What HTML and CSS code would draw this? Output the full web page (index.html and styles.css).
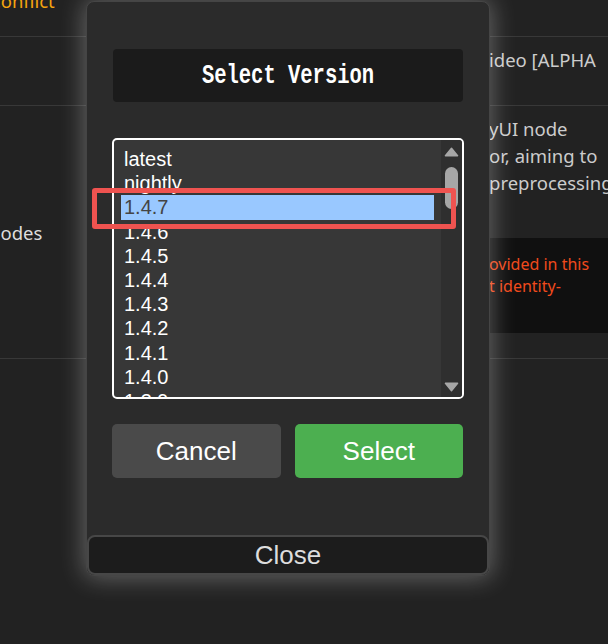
FILE: index.html
```html
<!DOCTYPE html>
<html lang="en">
<head>
    <meta charset="UTF-8">
    <meta name="viewport" content="width=device-width, initial-scale=1.0">
    <title>Select Version</title>
    <link rel="stylesheet" href="styles.css">
</head>
<body>
    <main class="node-table">
        <div class="row row-first">
            <div class="cell conflict">Conflict</div>
            <div class="cell"></div>
            <div class="cell cell-desc"></div>
        </div>
        <div class="row row-second">
            <div class="cell"></div>
            <div class="cell"></div>
            <div class="cell cell-desc">
                <p class="line">ideo [ALPHA</p>
            </div>
        </div>
        <div class="row row-third">
            <div class="cell cell-center">nodes</div>
            <div class="cell"></div>
            <div class="cell cell-desc">
                <p class="line">yUI node</p>
                <p class="line">or, aiming to</p>
                <p class="line">preprocessing</p>
                <div class="warning">
                    <p class="line-warn">ovided in this</p>
                    <p class="line-warn">t identity-</p>
                </div>
            </div>
        </div>
        <div class="row row-last"></div>
    </main>

    <!-- version picker modal -->
    <div class="dialog">
        <div class="dialog-title"><span>Select Version</span></div>
        <div class="version-list">
            <div class="options">
                <div class="option">latest</div>
                <div class="option">nightly</div>
                <div class="option selected">1.4.7</div>
                <div class="option">1.4.6</div>
                <div class="option">1.4.5</div>
                <div class="option">1.4.4</div>
                <div class="option">1.4.3</div>
                <div class="option">1.4.2</div>
                <div class="option">1.4.1</div>
                <div class="option">1.4.0</div>
                <div class="option">1.3.9</div>
            </div>
            <div class="scrollbar">
                <svg class="arrow" width="15" height="10" viewBox="0 0 15 10">
                    <path d="M7.5 1.2 L13.6 8.8 H1.4 Z" fill="#a6a6a6" stroke="#a6a6a6" stroke-width="1.4" stroke-linejoin="round"/>
                </svg>
                <div class="thumb"></div>
                <svg class="arrow arrow-down" width="15" height="10" viewBox="0 0 15 10">
                    <path d="M1.4 1.2 H13.6 L7.5 8.8 Z" fill="#a6a6a6" stroke="#a6a6a6" stroke-width="1.4" stroke-linejoin="round"/>
                </svg>
            </div>
        </div>
        <div class="actions">
            <button class="btn btn-cancel">Cancel</button>
            <button class="btn btn-select">Select</button>
        </div>
        <button class="btn-close">Close</button>
    </div>

    <div class="highlight"></div>
</body>
</html>
```

FILE: styles.css
```css
body {
    margin: 0;
    height: 644px;
    overflow: hidden;
    position: relative;
    background-color: #222;
    font-family: "Noto Sans", sans-serif;
}

/* table behind the modal */
.node-table { margin: -22px 0 0 -11px; width: 660px; }
.row {
    display: grid;
    grid-template-columns: 200px 276px 184px;
    box-sizing: border-box;
    border-bottom: 1px solid #383838;
}
.row-first { height: 59px; }
.row-second { height: 69px; }
.row-third { height: 253px; }
.row-last { border-bottom: none; }
.cell {
    padding-top: 9px;
    font-size: 18.5px;
    line-height: 27px;
    color: #ccc;
    white-space: nowrap;
}
.cell-center { align-self: center; padding-top: 0; color: #ddd; }
.conflict { color: #f5a40f; }
.line { margin: 0; padding-left: 24px; }
.warning {
    margin-top: 42px;
    padding: 15px 0 36px 24px;
    background-color: #101010;
    color: #f04a1c;
    font-size: 16px;
    line-height: 22px;
}
.line-warn { margin: 0; }

/* modal */
.dialog {
    position: absolute;
    left: 86px;
    top: 1px;
    width: 404px;
    box-sizing: border-box;
    display: flex;
    flex-direction: column;
    padding: 47px 25px 0;
    background-color: #2b2b2b;
    border: 1px solid #454545;
    border-radius: 8px;
    box-shadow: 0 0 24px 2px rgba(255,255,255,0.3);
}
.dialog-title {
    margin: 0 1px;
    height: 53px;
    display: flex;
    align-items: center;
    justify-content: center;
    background-color: #1b1b1b;
    border-radius: 4px;
    color: #fff;
    font-family: "Liberation Mono", monospace;
    font-weight: bold;
    font-size: 20.5px;
}
.dialog-title span { display: inline-block; transform: scaleY(1.32); }

.version-list {
    margin-top: 36px;
    height: 261px;
    box-sizing: border-box;
    display: flex;
    overflow: hidden;
    background-color: #373737;
    border: 2px solid #fff;
    border-radius: 5px;
}
.options {
    flex: 1;
    padding: 7px 7px 0;
    overflow: hidden;
    font-family: "Liberation Sans", Arial, sans-serif;
    font-size: 20px;
    line-height: 24.2px;
    color: #fff;
}
.option { padding-left: 3px; }
.option.selected { background-color: #99c8ff; color: #444; }
.scrollbar {
    width: 21px;
    box-sizing: border-box;
    display: flex;
    flex-direction: column;
    align-items: center;
    padding: 7px 0 5px;
    background-color: #2f2f2f;
}
.arrow { display: block; }
.arrow-down { margin-top: auto; }
.thumb {
    width: 13px;
    height: 42px;
    margin-top: 10px;
    border-radius: 7px;
    background-color: #a6a6a6;
}

.actions { margin-top: 25px; display: flex; gap: 14px; padding-right: 1px; }
.btn {
    flex: 1;
    height: 54px;
    border: none;
    border-radius: 5px;
    color: #fff;
    font-family: "Liberation Sans", Arial, sans-serif;
    font-size: 26px;
    cursor: pointer;
}
.btn-cancel { background-color: #4a4a4a; }
.btn-select { background-color: #4caf50; }
.btn-close {
    margin: 57px -25px 0;
    height: 40px;
    padding: 0;
    background-color: #1c1c1c;
    border: 2px solid #474747;
    border-radius: 8px;
    color: #ddd;
    font-family: "Liberation Sans", Arial, sans-serif;
    font-size: 26px;
    cursor: pointer;
}

/* red marker over the picked version */
.highlight {
    position: absolute;
    left: 92px;
    top: 188px;
    width: 364px;
    height: 41px;
    box-sizing: border-box;
    border: 5px solid #ef5350;
    border-radius: 3px;
}
```
